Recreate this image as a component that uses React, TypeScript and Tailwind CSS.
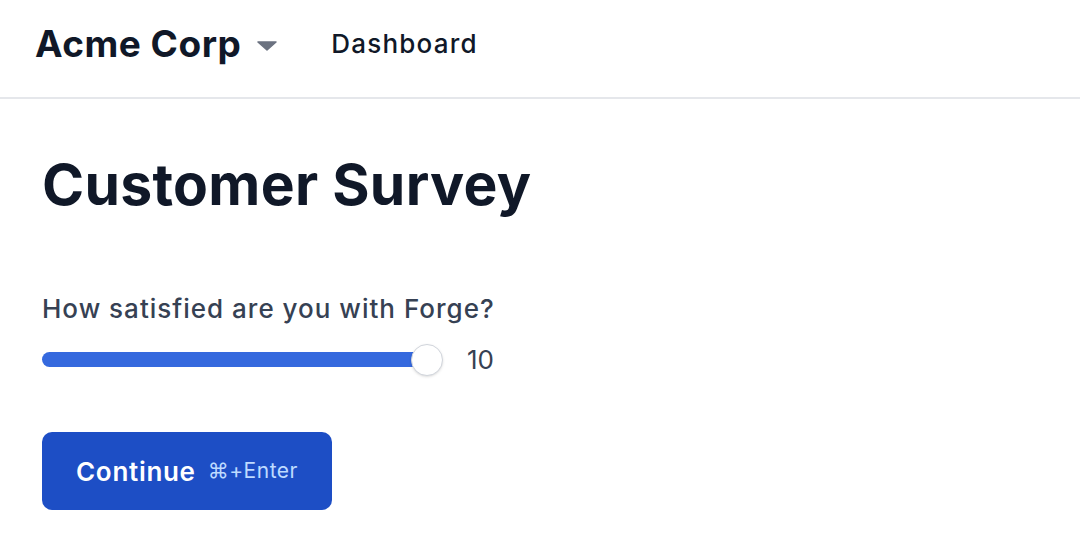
import { useState } from "react";

const App = () => {
  const [score, setScore] = useState(10);

  return (
    <div className="min-h-screen bg-white text-gray-900" style={{ fontFamily: "Inter, 'Noto Sans', sans-serif" }}>
      <header className="h-[99px] border-b-2 border-gray-200 flex items-center px-[35px] pb-[10px]">
        <div className="flex items-center">
          <span className="text-[37px] font-bold tracking-[0.5px]">Acme Corp</span>
          <svg width="20" height="10" viewBox="0 0 20 10" className="ml-[16px] mt-[4px]">
            <path d="M1 1 L19 1 L10 9 Z" fill="#6b7280" stroke="#6b7280" strokeWidth="1.5" strokeLinejoin="round" />
          </svg>
        </div>
        <nav className="ml-[54px] text-[26px] font-medium tracking-[1.2px]">Dashboard</nav>
      </header>

      <main className="px-[42px] pt-[57px]">
        <h1 className="text-[57px] font-bold tracking-[0.3px] leading-none">Customer Survey</h1>

        <div className="mt-[76px]">
          <label className="block text-[26px] font-medium tracking-[1px] text-gray-700">
            How satisfied are you with Forge?
          </label>
          <div className="mt-[12px] flex items-center">
            <div className="relative w-[400px] h-[32px] flex items-center">
              <div className="w-full h-[15px] rounded-full bg-[#3569de]" />
              <div
                className="absolute top-0 h-[32px] w-[32px] rounded-full bg-white border border-gray-300 shadow"
                style={{ left: `${(score / 10) * 369}px` }}
              />
            </div>
            <span className="ml-[25px] text-[26px] text-gray-700">{score}</span>
          </div>
        </div>

        <button
          onClick={() => setScore(score)}
          className="mt-[53px] w-[290px] h-[78px] rounded-[10px] bg-[#1d4ec5] text-white flex items-center justify-center"
        >
          <span className="text-[26px] font-semibold tracking-[0.7px]">Continue</span>
          <span className="ml-[12px] text-[21px] tracking-[0.5px] text-blue-200">⌘+Enter</span>
        </button>
      </main>
    </div>
  );
};

export default App;
